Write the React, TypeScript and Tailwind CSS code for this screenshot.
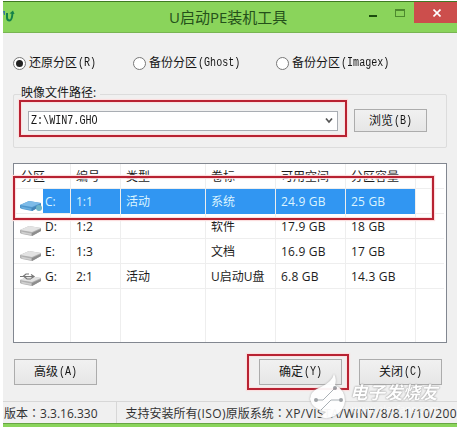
import React from 'react';
import { clsx } from 'clsx';

interface Partition {
  drive: string;
  index: string;
  type: string;
  label: string;
  free: string;
  size: string;
  kind: 'system' | 'disk' | 'usb';
}

const partitions: Partition[] = [
  { drive: 'C:', index: '1:1', type: '活动', label: '系统', free: '24.9 GB', size: '25 GB', kind: 'system' },
  { drive: 'D:', index: '1:2', type: '', label: '软件', free: '17.9 GB', size: '18 GB', kind: 'disk' },
  { drive: 'E:', index: '1:3', type: '', label: '文档', free: '16.9 GB', size: '17 GB', kind: 'disk' },
  { drive: 'G:', index: '2:1', type: '活动', label: 'U启动U盘', free: '6.8 GB', size: '14.3 GB', kind: 'usb' },
];

const columns = ['分区', '编号', '类型', '卷标', '可用空间', '分区容量'];

const GRID = 'grid grid-cols-[57px_50px_85px_70px_70px_70px_1fr]';
const CELL = 'border-r border-[#eeeeee] pl-[5px] whitespace-nowrap';
const FRAME = 'absolute border-2 border-[#b82232] shadow-[0_0_1px_1px_#fbdede,inset_0_0_1px_1px_#fbdede]';

function Latin({ children }: { children: React.ReactNode }) {
  return <span className="inline-block origin-left scale-x-[0.84] -mr-[3.5px] font-['Liberation_Mono',monospace] text-[12px]">{children}</span>;
}

function DriveIcon({ kind }: { kind: Partition['kind'] }) {
  const blue = kind === 'system';
  return (
    <svg width="24" height="18" viewBox="0 0 24 18" className="shrink-0">
      <path d="M1 9 10 5 22 7 22 10 13 15 3 13 1 12Z" fill={blue ? '#4f96cc' : '#b0b0b0'} />
      <path d="M1 9 10 5 22 7 13 11Z" fill={blue ? '#7dbbe8' : '#e3e3e3'} />
      <path d="M2 10.500 12 12.500 12 14 3 12.500Z" fill={blue ? '#6aaede' : '#d0d0d0'} />
      <path d="M13 12 22 8 22 10 13 15Z" fill={blue ? '#4585b8' : '#8d8d8d'} />
      {blue && <circle cx="20" cy="12" r="3" fill="#6db4c8" />}
      {kind === 'usb' && (
        <path d="M1 5.500H14M4 5.500 7 3H10M5 5.500 8 8H12M12 3.500 15 5.500 12 7.500" fill="none" stroke="#777777" strokeWidth="1.200" />
      )}
    </svg>
  );
}

function Radio({ label, latin, checked, className }: { label: string; latin: string; checked?: boolean; className?: string }) {
  return (
    <label className={clsx('flex items-center whitespace-nowrap', className)}>
      <span className="mr-[3px] flex size-[13px] items-center justify-center rounded-full border border-[#777777] bg-white">
        {checked && <span className="size-[7px] rounded-full bg-[#222222]" />}
      </span>
      <span className="mr-px">{label}</span>
      <Latin>{latin}</Latin>
    </label>
  );
}

function Button({ label, latin, className }: { label: string; latin: string; className: string }) {
  return (
    <button className={clsx('flex items-center justify-center border border-[#acacac] bg-linear-to-b from-[#f1f1f1] to-[#e6e6e6] whitespace-nowrap', className)}>
      <span className="mr-px">{label}</span>
      <Latin>{latin}</Latin>
    </button>
  );
}

function TitleBar() {
  return (
    <header className="relative flex h-[32px] items-start border-t border-b border-t-[#3f7a22] border-b-[#78b552] bg-[#8ad45b]">
      <svg width="13" height="14" viewBox="0 0 13 14" className="mt-[7px]">
        <path d="M0 2h2v4H1z" fill="#3978a0" />
        <path d="M4 4v4.500q0 3 2.500 3T9.500 4" fill="none" stroke="#148049" strokeWidth="2" />
        <path d="M6.500 4.500 10 1.500 11.500 5Z" fill="#148049" />
      </svg>
      <h1 className="absolute top-[4px] left-[166px] text-[15px] leading-[22px] text-[#24501a]">U启动PE装机工具</h1>
      <div className="ml-auto flex">
        <span className="mt-[13px] mr-[18px] h-[2px] w-[8px] bg-[#1c4d0d]" />
        <span className="mt-[7px] mr-[9px] h-[8px] w-[10px] border border-t-2 border-[#4d8a2e]" />
        <span className="flex h-[21px] w-[43px] items-center justify-center bg-[#cc4e4c] pl-[2px]">
          <svg width="8" height="8" viewBox="0 0 8 8">
            <path d="M.5.5 7.500 7.500M7.500.5.5 7.500" stroke="#ffffff" strokeWidth="1.600" />
          </svg>
        </span>
      </div>
    </header>
  );
}

function PartitionTable() {
  return (
    <section className="mx-[10px] mt-[15px] h-[180px] overflow-hidden border border-[#828790] bg-white pr-[2px] text-[12px] text-[#1c1c1c]">
      <div className={clsx(GRID, 'h-[25px] border-b border-[#eeeeee] leading-[26px]')}>
        {columns.map((name, i) => (
          <span key={name} className={clsx(CELL, i === 0 && 'pl-[7px]')}>{name}</span>
        ))}
      </div>
      {partitions.map((p) => {
        const active = p.kind === 'system';
        const cell = clsx(CELL, active && 'bg-[#3196f2] text-[#dcf4ff]');
        return (
          <div key={p.drive} className={clsx(GRID, 'h-[25px] border-b border-[#eeeeee] leading-[25px]')}>
            <span className="flex items-start border-r border-[#eeeeee] pl-[5px]">
              <span className="mt-[7px] h-[17px]"><DriveIcon kind={p.kind} /></span>
              <span className={clsx('h-[24px] flex-1 pl-[2px]', active && 'bg-[#3196f2] text-[#dcf4ff]')}>{p.drive}</span>
            </span>
            <span className={cell}>{p.index}</span>
            <span className={cell}>{p.type}</span>
            <span className={cell}>{p.label}</span>
            <span className={clsx(cell, 'tracking-[0.2px]')}>{p.free}</span>
            <span className={clsx(cell, 'tracking-[0.2px]')}>{p.size}</span>
          </div>
        );
      })}
      <div className={clsx(GRID, 'h-[60px]')}>
        {columns.map((name) => <span key={name} className={CELL} />)}
      </div>
    </section>
  );
}

function Watermark() {
  return (
    <div className="absolute top-[374px] left-[309px] h-[46px] w-[132px] opacity-95">
      <svg width="132" height="46" viewBox="0 0 132 46" className="drop-shadow-[0_0_1px_#aaaaaa]">
        <path d="M2 21Q4 16 12 13Q23 8 25 0Q28 5 26 11Q36 16 36 27Q35 36 27 41Q20 46 11 43L17 38Q3 35 1 25Z" fill="#ffffff" />
        <path d="M7 26H14L25 15M12 36 22 26H32" stroke="#a6adb2" fill="none" />
        <circle cx="7" cy="26" r="2" fill="#9b9fa3" />
        <circle cx="26" cy="14" r="2" fill="#9b9fa3" />
        <circle cx="32" cy="26" r="2" fill="#9b9fa3" />
      </svg>
      <span className="absolute top-[6px] left-[41px] text-[17.500px] leading-[24px] font-bold italic whitespace-nowrap text-white [text-shadow:0_0_2px_#888888,0_0_1px_#aaaaaa]">电子发烧友</span>
      <span className="absolute top-[28px] left-[43px] text-[10px] leading-[14px] whitespace-nowrap text-white/60">www.elecfans.com</span>
    </div>
  );
}

export default function App() {
  return (
    <div className="relative h-[427px] w-[457px] overflow-hidden bg-white pt-px pl-[3px] font-['Open_Sans','Noto_Sans_CJK_SC',sans-serif] text-[12px] leading-[16px] text-[#151515]">
      <div className="flex h-[426px] flex-col bg-[#f0f0f0]">
        <TitleBar />

        <div className="mt-[20px] flex h-[20px] items-center">
          <Radio label="还原分区" latin="(R)" checked className="ml-[10px] w-[120px]" />
          <Radio label="备份分区" latin="(Ghost)" className="w-[143px]" />
          <Radio label="备份分区" latin="(Imagex)" />
        </div>

        <fieldset className="relative mx-[10px] mt-[21px] h-[54px] rounded-[2px] border border-[#dcdcdc]">
          <span className="absolute top-[-10px] left-[7px] bg-[#f0f0f0] pr-1">映像文件路径:</span>
          <div className="mt-[14px] ml-[14px] flex items-center">
            <div className="flex h-[20px] w-[310px] items-center justify-between border border-[#a9adb3] bg-white pr-[4px] pl-[2px]">
              <Latin>Z:\WIN7.GHO</Latin>
              <svg width="8" height="7" viewBox="0 0 8 7">
                <path d="M1 1.500 4 5 7 1.500" fill="none" stroke="#555555" strokeWidth="1.700" />
              </svg>
            </div>
            <Button label="浏览" latin="(B)" className="ml-[16px] h-[23px] w-[73px]" />
          </div>
        </fieldset>

        <PartitionTable />

        <div className="mt-[16px] flex">
          <Button label="高级" latin="(A)" className="ml-[11px] h-[26px] w-[83px]" />
          <Button label="确定" latin="(Y)" className="ml-[162px] h-[26px] w-[83px]" />
          <Button label="关闭" latin="(C)" className="ml-[17px] h-[26px] w-[83px]" />
        </div>

        <footer className="mt-auto flex h-[22px] shrink-0 border-t border-[#d7d7d7] leading-[21px] whitespace-nowrap text-[#333333]">
          <span className="w-[115px] border-r border-[#d7d7d7] pl-px">版本<span className="font-['Noto_Sans_CJK_TC',sans-serif]">：</span>3.3.16.330</span>
          <span className="pl-[8px]">支持安装所有<span className="tracking-[0.4px]">(ISO)</span>原版系统<span className="font-['Noto_Sans_CJK_TC',sans-serif]">：</span><span className="tracking-[0.42px]">XP/VISTA/WIN7/8/8.1/10/200</span></span>
        </footer>
        <div className="h-[4px] shrink-0 border-t border-[#68a544] bg-[#8ad45b]" />
      </div>

      {/* Highlight frames */}
      <div className={clsx(FRAME, 'top-[100px] left-[19px] h-[37px] w-[328px]')} />
      <div className={clsx(FRAME, 'top-[176px] left-[13px] h-[44px] w-[421px]')} />
      <div className={clsx(FRAME, 'top-[354px] left-[247px] h-[36px] w-[102px]')} />
      <Watermark />
    </div>
  );
}
